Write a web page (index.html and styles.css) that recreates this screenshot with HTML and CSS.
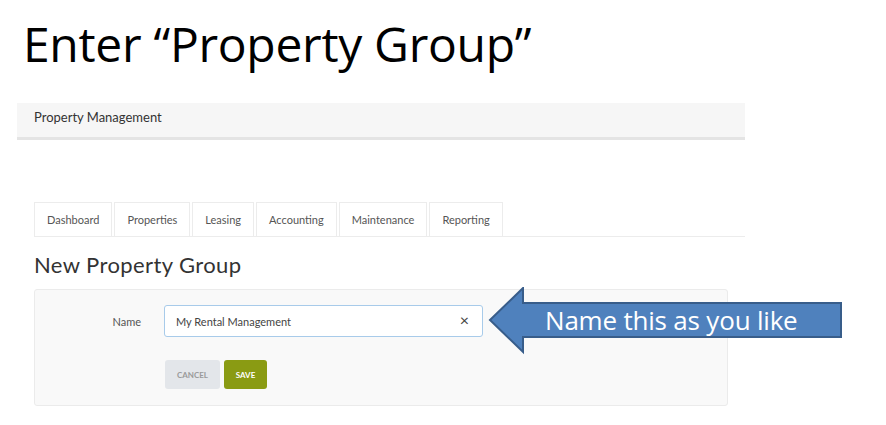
FILE: index.html
```html
<!DOCTYPE html>
<html lang="en">
<head>
  <meta charset="UTF-8">
  <meta name="viewport" content="width=device-width, initial-scale=1.0">
  <title>Enter Property Group</title>
  <link rel="stylesheet" href="styles.css">
</head>
<body>
  <div class="slide">
    <h1 class="slide-title">Enter &ldquo;Property Group&rdquo;</h1>

    <div class="app-header">Property Management</div>

    <ul class="tabs">
      <li class="tab">Dashboard</li>
      <li class="tab">Properties</li>
      <li class="tab">Leasing</li>
      <li class="tab">Accounting</li>
      <li class="tab">Maintenance</li>
      <li class="tab">Reporting</li>
    </ul>

    <h2 class="page-title">New Property Group</h2>

    <div class="panel">
      <div class="form-row">
        <label class="form-label" for="name">Name</label>
        <div class="input-wrap">
          <input class="text-input" id="name" type="text" value="My Rental Management">
          <span class="clear-btn">&times;</span>
        </div>
      </div>
      <div class="form-actions">
        <button class="btn btn-cancel">CANCEL</button>
        <button class="btn btn-save">SAVE</button>
      </div>
    </div>

    <!-- callout arrow -->
    <div class="callout">
      <svg class="callout-shape" width="356" height="68" viewBox="0 0 356 68">
        <path d="M2 33 L35 1 L35 16 L353 16 L353 50 L35 50 L35 65 Z" fill="#4f81bd" stroke="#385d8a" stroke-width="2" stroke-linejoin="miter"/>
      </svg>
      <span class="callout-text">Name this as you like</span>
    </div>
  </div>
</body>
</html>
```

FILE: styles.css
```css
/* page */
body {
  margin: 0;
  background: #fff;
  font-family: Lato, "Open Sans", sans-serif;
}

.slide {
  position: relative;
  width: 886px;
  height: 425px;
  overflow: hidden;
}

.slide-title {
  margin: 0;
  height: 103px;
  padding-left: 23px;
  box-sizing: border-box;
  font-family: "Open Sans", sans-serif;
  font-weight: 400;
  font-size: 48px;
  line-height: 88px;
  letter-spacing: -0.3px;
  color: #000;
}

/* app chrome */
.app-header {
  margin-left: 17px;
  width: 728px;
  height: 37px;
  box-sizing: border-box;
  padding: 6px 0 0 17px;
  background: #f6f6f6;
  border-bottom: 3px solid #e4e4e4;
  font-size: 13px;
  color: #333;
}

.tabs {
  display: flex;
  gap: 2px;
  margin: 62px 0 0 34px;
  padding: 0;
  width: 711px;
  list-style: none;
  border-bottom: 1px solid #ececec;
}

.tab {
  height: 33px;
  line-height: 33px;
  padding: 0 12px;
  border: 1px solid #ececec;
  border-bottom: none;
  font-size: 11px;
  color: #555;
}

.page-title {
  margin: 16px 0 0 34px;
  height: 36px;
  font-weight: 400;
  font-size: 22px;
  line-height: 24px;
  letter-spacing: 0.4px;
  color: #333;
}

/* form */
.panel {
  margin-left: 34px;
  width: 694px;
  height: 117px;
  box-sizing: border-box;
  padding-top: 15px;
  background: #f9f9f9;
  border: 1px solid #ebebeb;
  border-radius: 3px;
}

.form-row {
  display: flex;
  align-items: center;
}

.form-label {
  width: 106px;
  text-align: right;
  padding-right: 23px;
  font-size: 11px;
  color: #555;
}

.input-wrap {
  position: relative;
}

.text-input {
  display: block;
  width: 319px;
  height: 32px;
  box-sizing: border-box;
  padding: 0 11px;
  border: 1px solid #a8cbea;
  border-radius: 3px;
  background: #fff;
  font-family: Lato, sans-serif;
  font-size: 11px;
  color: #444;
  outline: none;
}

.clear-btn {
  position: absolute;
  right: 14px;
  top: 7px;
  font-size: 16px;
  line-height: 16px;
  color: #444;
}

.form-actions {
  display: flex;
  gap: 4px;
  margin: 23px 0 0 130px;
}

.btn {
  height: 29px;
  padding: 0 11px;
  border: none;
  border-radius: 3px;
  font-family: Lato, sans-serif;
  font-size: 8px;
  font-weight: 700;
}

.btn-cancel {
  width: 55px;
  background: #e3e6ea;
  color: #9a9a9a;
}

.btn-save {
  width: 43px;
  background: #8a9b13;
  color: #fff;
}

/* callout arrow over the page */
.callout {
  position: absolute;
  left: 488px;
  top: 287px;
  width: 356px;
  height: 68px;
}

.callout-shape {
  display: block;
}

.callout-text {
  position: absolute;
  left: 57px;
  top: 17px;
  font-family: "Open Sans", sans-serif;
  font-size: 26px;
  line-height: 32px;
  letter-spacing: -0.2px;
  color: #fff;
}
```
